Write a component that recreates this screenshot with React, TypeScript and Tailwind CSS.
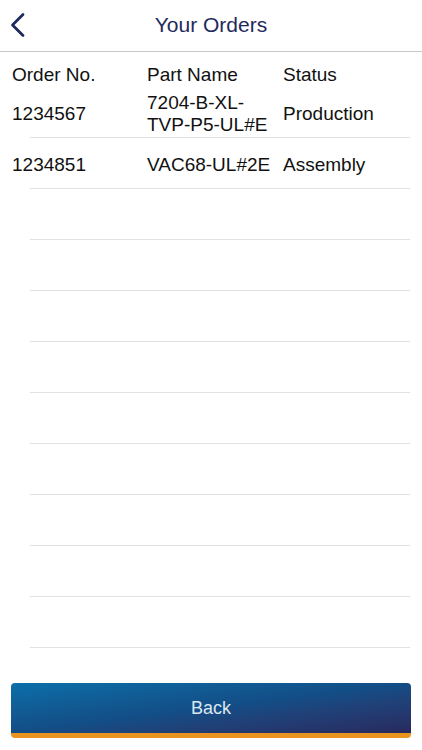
import React from 'react';

const orders = [
  { no: '1234567', part: '7204-B-XL-TVP-P5-UL#E', status: 'Production' },
  { no: '1234851', part: 'VAC68-UL#2E', status: 'Assembly' },
];

export default function App() {
  const emptyRows = Array.from({ length: 9 });

  return (
    <div
      className="flex flex-col h-[750px] w-full bg-white text-[#111111]"
      style={{ fontFamily: '"Liberation Sans", Arial, sans-serif' }}
    >
      {/* header */}
      <div className="relative flex items-center justify-center h-[52px] border-b border-[#c8c8c8]">
        <button className="absolute left-[8px] top-[11px] w-[20px] h-[28px] flex items-center justify-center">
          <svg width="16" height="26" viewBox="0 0 16 26" fill="none">
            <polyline points="13,2.5 2.5,13 13,23.5" stroke="#1f2a5c" strokeWidth="2.8" strokeLinecap="round" strokeLinejoin="round" />
          </svg>
        </button>
        <h1 className="text-[21px] text-[#1f2a5c] leading-none -mt-[2px]">Your Orders</h1>
      </div>

      {/* table */}
      <div className="grid grid-cols-[135px_136px_1fr] pl-3 pt-3 h-[35px] text-[19px] leading-[22px]">
        <span>Order No.</span>
        <span>Part Name</span>
        <span>Status</span>
      </div>

      <div className="flex flex-col">
        {orders.map((o) => (
          <div key={o.no} className="ml-[30px] mr-3 h-[51px] pt-[3px] border-b border-[#e2e2e2] flex items-center">
            <div className="grid grid-cols-[135px_136px_1fr] -ml-[18px] w-full items-center text-[19px] leading-[22px]">
              <span>{o.no}</span>
              <span className="break-words">{o.part}</span>
              <span>{o.status}</span>
            </div>
          </div>
        ))}
        {emptyRows.map((_, i) => (
          <div key={i} className="ml-[30px] mr-3 h-[51px] border-b border-[#e2e2e2]" />
        ))}
      </div>

      <div className="flex-1" />

      {/* back button */}
      <div className="px-[11px] mb-3">
        <button className="w-full h-[55px] rounded-[4px] border-b-[5px] border-[#e8941f] bg-gradient-to-br from-[#0a6fa9] via-[#134d86] to-[#272a5e] text-[#dbe7f1] text-[18px] flex items-center justify-center">
          Back
        </button>
      </div>
    </div>
  );
}
